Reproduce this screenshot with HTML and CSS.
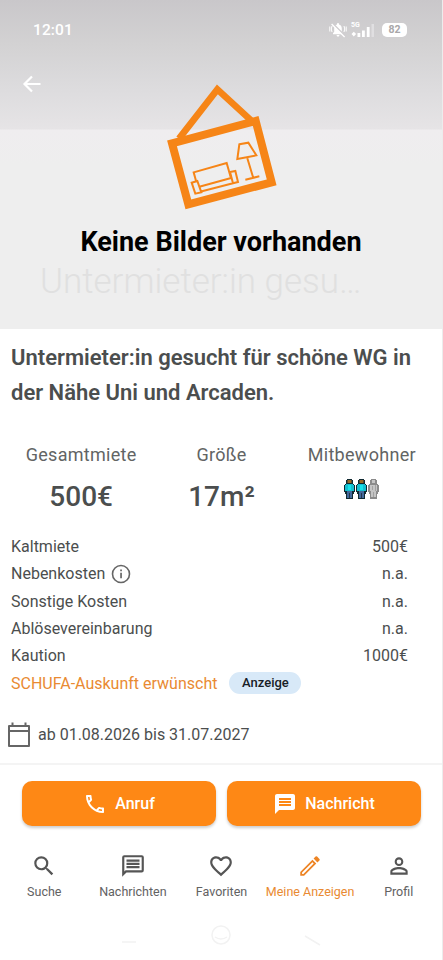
FILE: index.html
```
<!DOCTYPE html>
<html lang="de">
<head>
<meta charset="utf-8">
<title>Untermieter:in gesucht</title>
<link rel="stylesheet" href="styles.css">
</head>
<body>
<main class="screen">
  <header class="hero">
    <div class="status">
      <span class="clock">12:01</span>
      <div class="status-icons">
        <svg width="18" height="16" viewBox="0 0 18 16"><path d="M4 12.2V11l1.2-1V6.500C5.200 4.300 6.600 2.900 8 2.500V1.200h2v1.300c1.600.4 2.800 1.800 2.800 4V10l1.200 1v1.200zM7.500 13h3q-.3 1.700-1.500 1.700T7.500 13z" fill="#fff"/><path d="M3 4Q1.500 7 3 10M15 4Q16.500 7 15 10M.8 4.500v5M17.200 4.500v5" stroke="#fff" fill="none"/><path d="M3.800 1.600l12 12" stroke="#cfcdcf" stroke-width="1.600"/><path d="M2.600 2l13 13" stroke="#fff" stroke-width="1.400"/></svg>
        <div class="signal">
          <span class="net">5G</span>
          <svg width="24" height="16" viewBox="0 0 24 16"><path d="M.5 12l2.300-2.300L5.100 12l-2.300 2.500zM6.500 11h2.800v4H6.500zM11 8.500h2.800V15H11zM15.800 5h2.800v10h-2.800z" fill="#fff"/><path d="M20.500 2h2.500v13h-2.500z" fill="#e0dfe1"/></svg>
        </div>
        <span class="battery">82</span>
      </div>
    </div>
    <svg class="back" width="20" height="18" viewBox="0 0 20 18"><path d="M18.500 9H2.500M10 1.500L2.500 9l7.500 7.500" fill="none" stroke="#fff" stroke-width="2.200"/></svg>
    <svg class="placeholder" width="110" height="128" viewBox="50 20 330 384" fill="none" stroke="#f68517"><path d="M86 190L201 42l102 94" stroke-width="20"/><path d="M65 204l251-67 48 184-250 66z" stroke-width="24"/><g stroke-width="6"><path d="M138 320l-8-29 99-28 13 46M147 334l98-27M135 355l-11-33 17-5 12 34zM149 349l99-25M248 324l-9-34 16-3 8 33z"/><path d="M267 207l27-5 24 38-57 11zM291 249l17 56M285 313l42-10"/></g></svg>
    <p class="caption">Keine Bilder vorhanden</p>
    <p class="ghost-title">Untermieter:in gesu…</p>
  </header>

  <section class="details">
    <h1>Untermieter:in gesucht für schöne WG in<br>der Nähe Uni und Arcaden.</h1>
    <div class="stats">
      <div class="stat"><span class="label">Gesamtmiete</span><strong>500€</strong></div>
      <div class="stat"><span class="label">Größe</span><strong>17m²</strong></div>
      <div class="stat"><span class="label">Mitbewohner</span>
        <svg class="mates" width="35" height="20" viewBox="0 0 35 20">
          <defs><g id="body"><path d="M3 0h5v1h1v4h1v1h1v7h-1v2H9v5H2v-5H1v-2H0V6h1V5h1V1h1z"/></g></defs>
          <g id="mate"><use href="#body" fill="#102a32"/><path d="M3.500 1h4v3h-4z" fill="#9a6826"/><path d="M2 5h7v1h1v6H1V6h1z" fill="#14bfd0"/><path d="M4 6h3v5H4z" fill="#16e4ea"/><path d="M3 12h5v7H3z" fill="#43699b"/><path d="M5 14h1v5H5z" fill="#25364c"/></g>
          <use href="#mate" x="12"/>
          <g transform="translate(24)"><use href="#body" fill="#8b8b8b"/><path d="M4 1h3v3H4zM2 6h7v6H2zM3 12h5v6H3z" fill="#c5c5c5"/><path d="M4 7h1v4H4zM7 6h1v6H7zM5 13h1v5H5z" fill="#a2a2a2"/></g>
        </svg>
      </div>
    </div>
    <dl class="costs">
      <div><dt class="t1">Kaltmiete</dt><dd>500€</dd></div>
      <div><dt class="t2">Nebenkosten</dt><svg class="info" width="20" height="20" viewBox="0 0 20 20"><circle cx="10" cy="10" r="8.500" fill="none" stroke="#666" stroke-width="1.600"/><path d="M9.200 5.500h1.700v1.800H9.200zM9.200 8.800h1.700v5.500H9.200z" fill="#666"/></svg><dd>n.a.</dd></div>
      <div><dt class="t3">Sonstige Kosten</dt><dd>n.a.</dd></div>
      <div><dt class="t4">Ablösevereinbarung</dt><dd>n.a.</dd></div>
      <div><dt class="t5">Kaution</dt><dd>1000€</dd></div>
      <div><dt class="schufa">SCHUFA-Auskunft erwünscht</dt><dd class="badge">Anzeige</dd></div>
    </dl>
    <div class="period">
      <svg width="24" height="26" viewBox="0 0 24 26"><path d="M2 4h20v20H2zM2 9h20M5.500 4V.5M18.500 4V.5" fill="none" stroke="#666" stroke-width="2" stroke-linejoin="round"/></svg>
      <span>ab 01.08.2026 bis 31.07.2027</span>
    </div>
  </section>

  <div class="actions">
    <button><svg width="24" height="24" viewBox="0 0 24 24"><path fill="#fff" d="M6.540 5c.06.890.210 1.760.450 2.590l-1.200 1.200c-.410-1.200-.670-2.470-.760-3.790h1.510m9.860 12.020c.850.240 1.720.390 2.600.450v1.490c-1.320-.09-2.590-.350-3.800-.750l1.200-1.190M7.500 3H4c-.550 0-1 .450-1 1 0 9.390 7.610 17 17 17 .550 0 1-.450 1-1v-3.490c0-.550-.450-1-1-1-1.240 0-2.450-.2-3.570-.570-.1-.04-.210-.050-.310-.050-.260 0-.510.1-.710.290l-2.200 2.200c-2.830-1.450-5.150-3.760-6.590-6.590l2.200-2.200c.280-.280.360-.670.250-1.020C8.700 6.450 8.500 5.250 8.500 4c0-.550-.450-1-1-1z"/></svg><span>Anruf</span></button>
    <button><svg width="24" height="24" viewBox="0 0 24 24"><path fill="#fff" d="M20 2H4c-1.100 0-2 .9-2 2v18l4-4h14c1.100 0 2-.9 2-2V4c0-1.100-.9-2-2-2zm-2 12H6v-2h12v2zm0-3H6V9h12v2zm0-3H6V6h12v2z"/></svg><span>Nachricht</span></button>
  </div>
  <nav class="tabs">
    <a><svg viewBox="0 0 24 24"><path d="M15.500 14h-.790l-.280-.270A6.470 6.470 0 0 0 16 9.500 6.500 6.500 0 1 0 9.500 16c1.610 0 3.090-.590 4.230-1.570l.270.280v.790l5 4.990L20.490 19l-4.990-5zm-6 0a4.500 4.500 0 1 1 0-9 4.500 4.500 0 0 1 0 9z"/></svg><span>Suche</span></a>
    <a><svg viewBox="0 0 24 24"><path d="M4 2a2 2 0 0 0-2 2v18l4-4h14a2 2 0 0 0 2-2V4a2 2 0 0 0-2-2H4zm0 2h16v12H5.170L4 17.170V4zm2 8h12v2H6v-2zm0-3h12v2H6V9zm0-3h12v2H6V6z"/></svg><span>Nachrichten</span></a>
    <a><svg viewBox="0 0 24 24"><path d="M16.500 3c-1.740 0-3.410.810-4.500 2.090C10.910 3.810 9.240 3 7.500 3 4.420 3 2 5.420 2 8.500c0 3.780 3.400 6.860 8.550 11.540L12 21.350l1.450-1.320C18.600 15.360 22 12.280 22 8.500 22 5.420 19.580 3 16.500 3zm-4.400 15.550-.1.100-.1-.1C7.140 14.240 4 11.390 4 8.500 4 6.500 5.500 5 7.500 5c1.540 0 3.040.990 3.570 2.360h1.870C13.460 5.990 14.960 5 16.500 5c2 0 3.500 1.500 3.500 3.500 0 2.890-3.140 5.740-7.900 10.050z"/></svg><span>Favoriten</span></a>
    <a class="active"><svg viewBox="0 0 24 24"><path d="M3 17.460V21h3.540L17.800 9.740 14.260 6.200 3 17.460zM5.900 19.300H4.700v-1.200l9.560-9.500 1.140 1.140zM20.700 6.840a1 1 0 0 0 0-1.410L18.570 3.300a1 1 0 0 0-1.410 0L15.300 5.160l3.540 3.540z"/></svg><span>Meine Anzeigen</span></a>
    <a><svg viewBox="0 0 24 24"><path d="M12 5.900a2.100 2.100 0 1 1 0 4.200 2.100 2.100 0 0 1 0-4.200m0 9c2.970 0 6.100 1.460 6.100 2.100v1.100H5.900V17c0-.640 3.130-2.100 6.100-2.100M12 4a4 4 0 1 0 0 8 4 4 0 0 0 0-8zm0 9c-2.670 0-8 1.340-8 4v3h16v-3c0-2.660-5.330-4-8-4z"/></svg><span>Profil</span></a>
  </nav>
  <footer class="system">
    <svg width="200" height="26" viewBox="0 0 200 26" fill="none" stroke="#f2f2f2" stroke-width="1.500"><path d="M1 19h14M184 13l15 9"/><circle cx="100" cy="12" r="9"/><path d="M94 14q6 4 12 0"/></svg>
  </footer>
</main>
</body>
</html>
```
FILE: styles.css
```
* { box-sizing: border-box; }
body { margin: 0; background: #fff; font-family: Roboto, "Liberation Sans", sans-serif; color: #4b4e4e; }
p, h1, dl, dd { margin: 0; }
svg { display: block; flex: none; }
.screen { width: 443px; height: 960px; overflow: hidden; display: flex; flex-direction: column; border-right: 1px solid #ececec; white-space: nowrap; }

.hero { height: 329px; flex: none; display: flex; flex-direction: column; background: linear-gradient(#c9c7ca 0, #d3d2d3 45px, #dddcde 90px, #e6e4e6 129px, #efedef 130px, #eee 165px, #eee 100%); }
.status { height: 60px; padding: 0 35px 0 33px; display: flex; align-items: center; justify-content: space-between; color: #fff; }
.clock { font-size: 15.5px; font-weight: 500; letter-spacing: .1px; }
.status-icons { display: flex; align-items: center; gap: 4px; }
.signal { height: 16px; position: relative; }
.net { position: absolute; left: 0; top: -1px; font-size: 7px; line-height: 8px; font-weight: 700; }
.battery { width: 25px; height: 14px; margin-left: 3px; border-radius: 5px; background: #fff; color: #a9a7a9; font-size: 10.5px; line-height: 14px; font-weight: 700; text-align: center; }
.back { margin: 15px 0 0 22px; }
.placeholder { margin: -11px 0 0 166.500px; }
.caption { margin-top: 16px; text-align: center; font-size: 27px; line-height: 32px; font-weight: 700; color: #000; }
.ghost-title { margin: 3px 0 0 40px; font-size: 35px; line-height: 42px; font-weight: 300; color: #e0e0e0; }

.details { height: 434px; flex: none; padding: 11px 10px 0 11px; }
h1 { font-size: 22px; line-height: 35px; font-weight: 600; }
.stats { height: 82px; margin-top: 31px; display: grid; grid-template-columns: repeat(3, 1fr); }
.stat { display: flex; flex-direction: column; align-items: center; }
.label { font-size: 18px; line-height: 28px; color: #626464; letter-spacing: .3px; }
.stat strong { margin-top: 10px; font-size: 28px; line-height: 36px; font-weight: 500; }
.mates { margin-top: 10px; }
.costs { margin-top: 10px; padding-right: 24px; font-size: 16px; }
.costs div { height: 27.300px; display: flex; align-items: center; }
.costs dd { margin-left: auto; }
.costs .info { margin-left: 6px; }
.costs .schufa { color: #e98a32; }
.costs .badge { width: 72px; height: 22px; margin-left: 12px; border-radius: 11px; background: #d8e9f8; color: #172027; font-size: 13px; line-height: 22px; font-weight: 500; text-align: center; }
.period { margin: 25px 0 0 -4px; display: flex; align-items: center; gap: 7px; font-size: 16px; }

.actions { height: 73px; flex: none; padding: 18px 22px 0; border-top: 2px solid #f4f4f4; display: grid; grid-template-columns: 194px 194px; gap: 11px; }
.actions { padding-top: 16px; }
.actions button { height: 45px; padding: 0; border: 0; border-radius: 10px; background: #fe8815; color: #fff; font: 500 16px Roboto, sans-serif; display: flex; align-items: center; justify-content: center; gap: 8px; box-shadow: 0 2px 3px #0003; }
.tabs { width: 443px; height: 74px; flex: none; padding-top: 17px; display: grid; grid-template-columns: repeat(5, 1fr); }
.tabs a { display: flex; flex-direction: column; align-items: center; color: #626262; font-size: 12.500px; line-height: 16px; }
.tabs svg { width: 26px; height: 26px; fill: #555; margin-bottom: 5px; }
.tabs .active { color: #e98a32; }
.tabs .active svg { fill: #ed8424; }
.system { padding: 13px 0 0 121px; }
```
